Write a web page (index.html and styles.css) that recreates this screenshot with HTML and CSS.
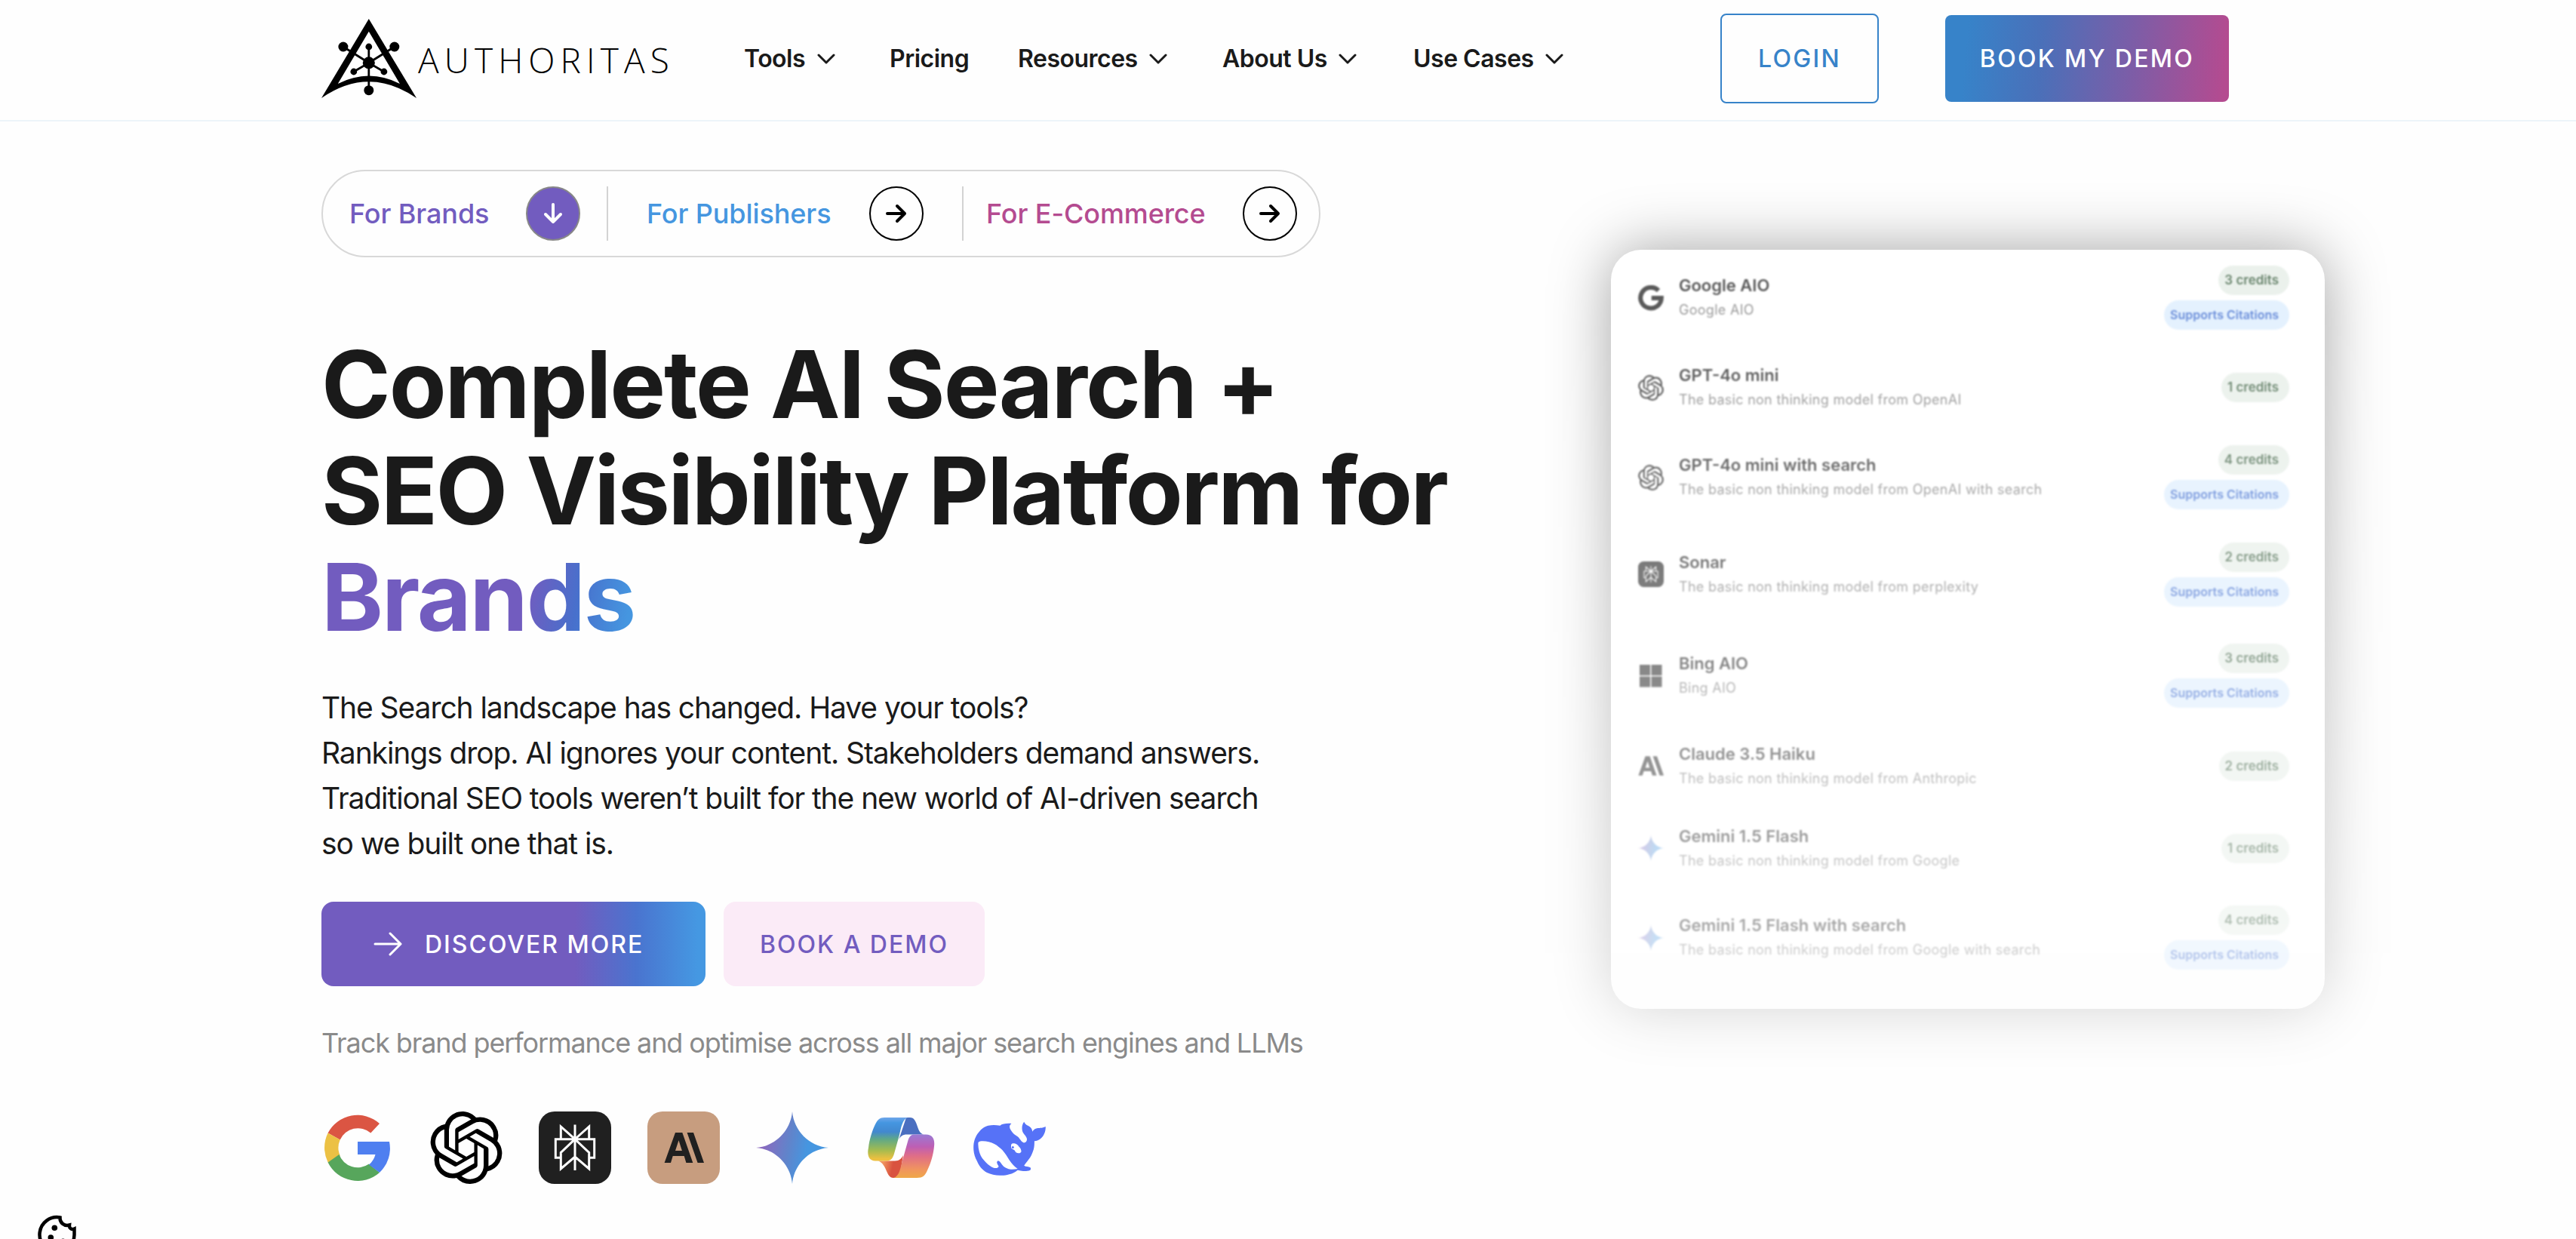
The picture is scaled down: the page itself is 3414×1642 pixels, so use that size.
FILE: index.html
```html
<!doctype html>
<html lang="en">
  <head>
    <title>Authoritas</title>
    <meta charset="utf-8" />
    <link rel="stylesheet" href="styles.css">
  </head>
  <body>
    <svg class="defs" width="0" height="0">
      <defs>
        <linearGradient id="star-fill" x1="0" y1="0.4" x2="1" y2="0.6">
          <stop offset="0.1" stop-color="#8a6abf" />
          <stop offset="0.45" stop-color="#6084cb" />
          <stop offset="0.7" stop-color="#4596e0" />
        </linearGradient>
        <linearGradient id="pilot-a" x1="0" y1="0" x2="0" y2="1">
          <stop offset="0" stop-color="#6fa6ea" />
          <stop offset="0.12" stop-color="#4596e0" />
          <stop offset="0.33" stop-color="#4288cf" />
          <stop offset="0.5" stop-color="#5fa888" />
          <stop offset="0.75" stop-color="#a3bb50" />
          <stop offset="0.95" stop-color="#ecc040" />
        </linearGradient>
        <linearGradient id="pilot-b" x1="0" y1="0" x2="0" y2="1">
          <stop offset="0" stop-color="#9a7ad4" />
          <stop offset="0.28" stop-color="#bd5fb4" />
          <stop offset="0.5" stop-color="#e06e86" />
          <stop offset="0.8" stop-color="#f0945f" />
          <stop offset="1" stop-color="#efa848" />
        </linearGradient>
        <linearGradient id="pilot-c" x1="0" y1="0" x2="1" y2="0.2">
          <stop offset="0.25" stop-color="#f0945f" />
          <stop offset="0.65" stop-color="#d9523f" />
        </linearGradient>
      </defs>
      <symbol id="chevron" viewBox="0 0 24 14"><path d="M2 2l10 10L22 2" fill="none" stroke="currentColor" stroke-width="3" stroke-linecap="round" stroke-linejoin="round" /></symbol>
      <symbol id="arrow" viewBox="0 0 28 28"><path d="M2 14h23M15 4l10 10-10 10" fill="none" stroke="currentColor" stroke-width="4" stroke-linecap="round" stroke-linejoin="round" /></symbol>
      <symbol id="openai" viewBox="0 0 24 24"><path fill="currentColor" d="M22.2819 9.8211a5.9847 5.9847 0 0 0-.5157-4.9108 6.0462 6.0462 0 0 0-6.5098-2.9A6.0651 6.0651 0 0 0 4.9807 4.1818a5.9847 5.9847 0 0 0-3.9977 2.9 6.0462 6.0462 0 0 0 .7427 7.0966 5.98 5.98 0 0 0 .511 4.9107 6.051 6.051 0 0 0 6.5146 2.9001A5.9847 5.9847 0 0 0 13.2599 24a6.0557 6.0557 0 0 0 5.7718-4.2058 5.9894 5.9894 0 0 0 3.9977-2.9001 6.0557 6.0557 0 0 0-.7475-7.0729zm-9.022 12.6081a4.4755 4.4755 0 0 1-2.8764-1.0408l.1419-.0804 4.7783-2.7582a.7948.7948 0 0 0 .3927-.6813v-6.7369l2.02 1.1686a.071.071 0 0 1 .038.052v5.5826a4.504 4.504 0 0 1-4.4945 4.4944zm-9.6607-4.1254a4.4708 4.4708 0 0 1-.5346-3.0137l.142.0852 4.783 2.7582a.7712.7712 0 0 0 .7806 0l5.8428-3.3685v2.3324a.0804.0804 0 0 1-.0332.0615L9.74 19.9502a4.4992 4.4992 0 0 1-6.1408-1.6464zM2.3408 7.8956a4.485 4.485 0 0 1 2.3655-1.9728V11.6a.7664.7664 0 0 0 .3879.6765l5.8144 3.3543-2.0201 1.1685a.0757.0757 0 0 1-.071 0l-4.8303-2.7865A4.504 4.504 0 0 1 2.3408 7.872zm16.5963 3.8558L13.1038 8.364 15.1192 7.2a.0757.0757 0 0 1 .071 0l4.8303 2.7913a4.4944 4.4944 0 0 1-.6765 8.1042v-5.6772a.79.79 0 0 0-.407-.667zm2.0107-3.0231l-.142-.0852-4.7735-2.7818a.7759.7759 0 0 0-.7854 0L9.409 9.2297V6.8974a.0662.0662 0 0 1 .0284-.0615l4.8303-2.7866a4.4992 4.4992 0 0 1 6.6802 4.66zM8.3065 12.863l-2.02-1.1638a.0804.0804 0 0 1-.038-.0567V6.0742a4.4992 4.4992 0 0 1 7.3757-3.4537l-.142.0805L8.704 5.459a.7948.7948 0 0 0-.3927.6813zm1.0976-2.3654l2.602-1.4998 2.6069 1.4998v2.9994l-2.5974 1.4997-2.6067-1.4997Z" /></symbol>
      <symbol id="perplexity" viewBox="0 0 96 96">
        <rect width="96" height="96" rx="21" fill="currentColor" />
        <path d="M48 17.5V78M29.3 61.3h-7V36.7h51.4v24.6h-7M48 36.7L29.3 20v16.7M48 36.7L66.7 20v16.7M48 36.7L29.3 54.5V76L48 60l18.7 16V54.5z" fill="none" stroke="#fff" stroke-width="3" />
      </symbol>
      <symbol id="anthropic" viewBox="21 28 53 40"><path fill="currentColor" fill-rule="evenodd" d="M21.6 68L36 28h9.3l14 40h-8.9l-2.7-9h-15L30 68zM40.5 38.3L36 52h8.9zM51.6 28H60l14 40h-8.4z" /></symbol>
      <symbol id="star" viewBox="0 0 96 96"><path fill="url(#star-fill)" d="M48 0C50 25 70 46 96 48C70 50 50 71 48 96C46 71 26 50 0 48C26 46 46 25 48 0z" /></symbol>
    </svg>

    <header class="header">
      <a class="logo">
        <svg class="logo-mark" viewBox="0 0 126 108">
          <path fill-rule="evenodd" d="M62.8 1L126 106Q62.8 62.5 0 106zM62.8 17.7L21.8 87Q62.8 66 103.9 87z" />
          <path d="M62.8 38v57M28.9 38l33.9 21.3L96.8 38M42.8 71l20-11.7 20 11.7" fill="none" stroke="#000" stroke-width="2.8" />
          <circle cx="62.8" cy="59.3" r="8" /><circle cx="28.9" cy="38" r="6.5" /><circle cx="96.8" cy="38" r="6.5" />
          <circle cx="62.8" cy="38" r="4.4" /><circle cx="42.8" cy="71" r="4.4" /><circle cx="82.9" cy="71" r="4.4" /><circle cx="62.8" cy="95.7" r="6.5" />
        </svg>
        <span class="logo-text">AUTHORITAS</span>
      </a>
      <nav class="nav">
        <a>Tools <svg><use href="#chevron" /></svg></a>
        <a>Pricing</a>
        <a>Resources <svg><use href="#chevron" /></svg></a>
        <a>About Us <svg><use href="#chevron" /></svg></a>
        <a>Use Cases <svg><use href="#chevron" /></svg></a>
      </nav>
      <a class="btn-login">LOGIN</a>
      <a class="btn-demo">BOOK MY DEMO</a>
    </header>

    <main class="hero">
      <section class="intro">
        <div class="tabs">
          <a class="tab brands"><span>For Brands</span><i class="round"><svg><use href="#arrow" /></svg></i></a>
          <a class="tab publishers"><span>For Publishers</span><i class="round"><svg><use href="#arrow" /></svg></i></a>
          <a class="tab ecommerce"><span>For E-Commerce</span><i class="round"><svg><use href="#arrow" /></svg></i></a>
        </div>

        <h1><span class="wide">Complete AI Search +</span><br>SEO Visibility Platform for<br><span class="grad">Brands</span></h1>

        <p class="lead">The Search landscape has changed. Have your tools?<br>
          Rankings drop. AI ignores your content. Stakeholders demand answers.<br>
          Traditional SEO tools weren’t built for the new world of AI-driven search<br>
          so we built one that is.</p>

        <div class="actions">
          <a class="discover">
            <svg viewBox="0 0 38 32"><path d="M2 16h34M22 2l14 14-14 14" fill="none" stroke="#fff" stroke-width="3" stroke-linecap="round" stroke-linejoin="round" /></svg>
            <span>DISCOVER MORE</span>
          </a>
          <a class="book">BOOK A DEMO</a>
        </div>

        <p class="track">Track brand performance and optimise across all major search engines and LLMs</p>

        <div class="engines">
          <svg viewBox="0 0 96 96">
            <path fill="#db5543" d="M77 16A44 44 0 0 0 8.6 28.500L24.700 37.500A26 26 0 0 1 65.300 28.500z" />
            <path fill="#ecc144" d="M8.6 28.5A44 44 0 0 0 8.6 67.5L24.7 58.500A26 26 0 0 1 24.7 37.500z" />
            <path fill="#57a65c" d="M8.6 67.5A44 44 0 0 0 77 81L63 69.5A26 26 0 0 1 23.500 57z" />
            <path fill="#4f7ff0" d="M48 40H90A44 44 0 0 1 77 81L63 70.5A26 26 0 0 0 71.5 57H48z" />
          </svg>
          <svg><use href="#openai" /></svg>
          <svg class="dark"><use href="#perplexity" /></svg>
          <span class="tan"><svg><use href="#anthropic" /></svg></span>
          <svg><use href="#star" /></svg>
          <svg viewBox="0 0 96 96">
            <path fill="#4a6fc0" d="M55 8H60C71 8 68 28 78 30.5H56C50 30.5 47 33 45 38z" />
            <path fill="url(#pilot-c)" d="M18 65.5H40C46 65.5 49 62 51 58L46 88H38C28 88 30 70 18 65.5z" />
            <path fill="url(#pilot-a)" d="M26 8H57C50 10 48 22 46 31L39 56C37 62 35 65.5 29 65.5H14C5 65.5 3 57 5 48C6 38 10 25 14 17C17 11 20 8 26 8z" />
            <path fill="url(#pilot-b)" d="M66 30.5H81C91 30.5 93 38 92 46C91 58 87 70 83 78C80 85 77 88 69 88H38C46 86 47 76 50 65L57 40C59 33 61 30.5 66 30.5z" />
          </svg>
          <svg viewBox="0 0 96 96">
            <path fill="#5672f7" d="M35.4 18.7C38 16.5 44 15.5 50.5 16C47.5 18 47.5 21 49.4 24.3C52 29 55 31 58.7 33.3C62 36 63 40 67 41.5C69.5 41.5 71.5 39 70.9 36C69.5 31 66 30 65 26C64 22 64.5 17 67.2 13.7C68.5 17 71 18 72.4 18.7C76 20.5 78 23 78.3 26.7C79.5 24.5 81 23.3 82.7 22.7C87 21.5 91 22.5 95.7 20C96.2 26 93.5 32 90 35.3C87 38 84 39 80.9 39.3C81 45 80.5 49 79 52.7C77.5 57 76 60 73.5 63.3C71 67 69 69 67.2 71.7C69.5 73.5 73 72.5 75.6 74.3C76.5 76 76 77 75.3 77.7C71 79.5 67 79 64.2 78.8C62 78.5 60.5 78 58.7 77.7C55 81 52 82 47.6 83.3C43 84.7 39 85 35.4 84.7C29 84.5 23 83.5 18 81C11 77 7.5 72 5 66C1.5 60 .2 54 .2 47.7C.2 40 2.5 33 7 27.7C11 22.5 15 20 19.8 18.7C25 17.5 30 17.8 35.4 18.7z" />
            <path fill="#fff" d="M6.5 41C8 39.3 10 39.3 12.4 39.3C18 39.3 23 40.5 27.2 42.7C32 45 35 48 38.3 51C42 55 45 60 47.6 64.3C51 69 54 73 58.7 76C55.5 76.5 52.5 77 49.4 76.7C45.5 76 43 75 40 72.7C37 70 36.5 66.5 32.8 65.3C31 66 31 68 31.7 69.3C32 71 33.5 71.5 33.5 73.3C32 75.5 29 75.3 27 74.7C23 73 20 71 16.9 67.7C13 64 10 60 8.7 56C7 51 6 46 6.5 41z" />
            <path fill="#fff" d="M50 44.5C50.5 42.5 52 42.3 54 42.3C57 42.5 59 44.5 60.5 46.7C62.5 48.5 63.5 50.5 63.5 53.3C62.5 55 61.5 55.5 59.8 55.3C57.5 55 56 54 55.4 52.7C54.5 50 51 50.5 50 48z" />
            <circle cx="52.3" cy="47.6" r="1.5" fill="#5672f7" />
          </svg>
        </div>
      </section>

      <section class="panel-fade">
        <div class="panel">
          <div class="row">
            <svg viewBox="0 0 96 96"><path d="M76 20A39 39 0 1 0 87 48H50" fill="none" stroke="currentColor" stroke-width="17" /></svg>
            <div class="model"><b>Google AIO</b><span>Google AIO</span></div>
            <div class="tags"><em>3 credits</em><em class="cite">Supports Citations</em></div>
          </div>
          <div class="row">
            <svg><use href="#openai" /></svg>
            <div class="model"><b>GPT-4o mini</b><span>The basic non thinking model from OpenAI</span></div>
            <div class="tags"><em>1 credits</em></div>
          </div>
          <div class="row">
            <svg><use href="#openai" /></svg>
            <div class="model"><b>GPT-4o mini with search</b><span>The basic non thinking model from OpenAI with search</span></div>
            <div class="tags"><em>4 credits</em><em class="cite">Supports Citations</em></div>
          </div>
          <div class="row">
            <svg><use href="#perplexity" /></svg>
            <div class="model"><b>Sonar</b><span>The basic non thinking model from perplexity</span></div>
            <div class="tags"><em>2 credits</em><em class="cite">Supports Citations</em></div>
          </div>
          <div class="row">
            <svg viewBox="0 0 34 34"><path fill="currentColor" d="M2 2h14v14H2zM17.500 2h14v14h-14zM2 17.500h14v14H2zM17.500 17.500h14v14h-14z" /></svg>
            <div class="model"><b>Bing AIO</b><span>Bing AIO</span></div>
            <div class="tags"><em>3 credits</em><em class="cite">Supports Citations</em></div>
          </div>
          <div class="row">
            <svg><use href="#anthropic" /></svg>
            <div class="model"><b>Claude 3.5 Haiku</b><span>The basic non thinking model from Anthropic</span></div>
            <div class="tags"><em>2 credits</em></div>
          </div>
          <div class="row">
            <svg class="pale"><use href="#star" /></svg>
            <div class="model"><b>Gemini 1.5 Flash</b><span>The basic non thinking model from Google</span></div>
            <div class="tags"><em>1 credits</em></div>
          </div>
          <div class="row">
            <svg class="pale"><use href="#star" /></svg>
            <div class="model"><b>Gemini 1.5 Flash with search</b><span>The basic non thinking model from Google with search</span></div>
            <div class="tags"><em>4 credits</em><em class="cite">Supports Citations</em></div>
          </div>
        </div>
      </section>
    </main>

    <svg class="cookie" viewBox="0 0 52 52">
      <path d="M29.5 3.500A23 23 0 1 0 48.5 26.5V18.5C45 20 41.5 18 42 13.5C35 15.5 29 10 29.5 3.500z" fill="none" stroke="#000" stroke-width="4.5" />
      <circle cx="22.3" cy="17.3" r="3.8" /><circle cx="17.3" cy="30" r="3.8" /><circle cx="33.5" cy="35" r="3.5" />
    </svg>
  </body>
</html>
```
FILE: styles.css
```css
* {
  box-sizing: border-box;
}

body {
  margin: 0;
  height: 1642px;
  overflow: hidden;
  background: #fefefe;
  color: #1a1a1a;
  font-family: Inter, "Liberation Sans", sans-serif;
}

.defs {
  display: block;
  height: 0;
}

/* header */
.header {
  display: flex;
  height: 161px;
  padding: 0 0 4px 426px;
  align-items: center;
  border-bottom: 2px solid #edf4f9;
  white-space: nowrap;
}

.logo {
  display: flex;
  width: 560px;
  align-items: center;
}

.logo-mark {
  width: 126px;
  height: 108px;
  margin-top: 1px;
}

.logo-text {
  margin-left: 2px;
  margin-top: 2px;
  color: #000;
  font-family: "Open Sans", sans-serif;
  font-size: 46px;
  font-weight: 300;
  letter-spacing: 7.1px;
}

.nav {
  display: grid;
  width: 1294px;
  grid-template-columns: 193px 170px 271px 253px auto;
  font-size: 32px;
  font-weight: 600;
  letter-spacing: -0.5px;
}

.nav svg {
  width: 24px;
  height: 14px;
  margin-left: 8px;
  vertical-align: 4px;
}

.btn-login,
.btn-demo {
  display: flex;
  align-items: center;
  justify-content: center;
  font-size: 32px;
  font-weight: 500;
  letter-spacing: 2.3px;
}

.btn-login {
  width: 210px;
  height: 119px;
  border: 2px solid #3783c9;
  border-radius: 8px;
  color: #3783c9;
}

.btn-demo {
  width: 376px;
  height: 115px;
  margin-left: 88px;
  border-radius: 8px;
  color: #fff;
  background: linear-gradient(95deg, #3783c9 8%, #4a70b9 34%, #7a5ea8 64%, #b44b90 98%);
}

/* hero */
.hero {
  display: flex;
  padding-left: 426px;
}

.intro {
  width: 1609px;
  padding-top: 64px;
  white-space: nowrap;
}

.tabs {
  display: flex;
  width: 1324px;
  height: 116px;
  padding-left: 35px;
  align-items: center;
  border: 2px solid #d8d8d8;
  border-radius: 58px;
  font-size: 36px;
  font-weight: 500;
  letter-spacing: -0.1px;
}

.tab {
  display: flex;
  height: 72px;
  align-items: center;
  justify-content: space-between;
}

.tab + .tab {
  border-left: 2px solid #d3d3d3;
}

.brands {
  width: 341px;
  padding-right: 35px;
  color: #725cbf;
}

.publishers {
  width: 471px;
  padding: 0 51px 0 51px;
  color: #4596e0;
}

.ecommerce {
  width: 444px;
  padding-left: 30px;
  color: #b44b90;
}

.round {
  display: flex;
  width: 72px;
  height: 72px;
  align-items: center;
  justify-content: center;
  border: 2px solid #000;
  border-radius: 50%;
  color: #000;
}

.round svg {
  width: 28px;
  height: 28px;
}

.brands .round {
  border-color: #888;
  background: #725cbf;
  color: #fff;
}

.brands .round svg {
  transform: rotate(90deg);
}

h1 {
  margin: 98px 0 0;
  font-size: 124px;
  font-weight: 700;
  line-height: 141px;
  letter-spacing: -2.5px;
  font-feature-settings: "calt" 0, "liga" 0;
}

.wide {
  letter-spacing: -2.1px;
}

.grad {
  letter-spacing: -2.1px;
  background: linear-gradient(100deg, #725cbf 64%, #4870cc 80%, #4596e0 96%);
  -webkit-background-clip: text;
  background-clip: text;
  color: transparent;
}

.lead {
  margin: 46px 0 47px;
  font-size: 39px;
  line-height: 60px;
  letter-spacing: -1.08px;
}

.actions {
  display: flex;
  gap: 24px;
  font-size: 32px;
  font-weight: 500;
  letter-spacing: 2px;
}

.actions a {
  display: flex;
  height: 112px;
  align-items: center;
  border-radius: 16px;
}

.discover {
  width: 509px;
  padding-left: 69px;
  background: linear-gradient(90deg, #725cbf 66%, #4a74cf 82%, #4598e2 98%);
  color: #fff;
}

.discover svg {
  width: 38px;
  height: 32px;
  margin-right: 30px;
}

.book {
  width: 346px;
  justify-content: center;
  background: #fbebf7;
  color: #725cbf;
}

.track {
  margin: 50px 0 66px;
  color: #8a8a8a;
  font-size: 36px;
  line-height: 50px;
  letter-spacing: -1.1px;
}

.engines {
  display: flex;
  gap: 48px;
  color: #000;
}

.engines > * {
  width: 96px;
  height: 96px;
}

.engines .dark {
  color: #202020;
}

.tan {
  display: flex;
  align-items: center;
  justify-content: center;
  border-radius: 20px;
  background: #c79d7f;
  color: #202020;
}

.tan svg {
  width: 53px;
  height: 40px;
}

/* model list, fades out to the bottom together with its shadow */
.panel-fade {
  margin: 50px 0 0;
  padding: 120px 100px 120px 100px;
  -webkit-mask-image: linear-gradient(#000 15%, rgba(0, 0, 0, 0.4) 90%);
  mask-image: linear-gradient(#000 15%, rgba(0, 0, 0, 0.4) 90%);
}

.panel {
  display: grid;
  width: 946px;
  height: 1006px;
  padding: 4px 47px 0 36px;
  grid-template-rows: 119px 119px 119px 138px 131px 108px 110px 127px;
  border-radius: 40px;
  background: #fff;
  box-shadow: 0 0 80px rgba(0, 0, 0, 0.36);
}

.row {
  display: flex;
  align-items: center;
  color: #5a5a5a;
  white-space: nowrap;
  filter: blur(0.8px);
}

.row svg {
  width: 34px;
  height: 34px;
}

.row .pale {
  opacity: 0.6;
}

.model {
  display: flex;
  flex-direction: column;
  margin-left: 20px;
  gap: 5px;
  flex: 1;
}

.model b {
  font-size: 22px;
  font-weight: 600;
  line-height: 28px;
}

.model span {
  color: #9c9c9c;
  font-size: 18px;
  line-height: 28px;
  letter-spacing: 0.28px;
}

.tags {
  display: flex;
  flex-direction: column;
  align-items: flex-end;
  gap: 7px;
}

.tags em {
  padding: 0 14px 0 8px;
  border-radius: 20px;
  background: #ebf1ec;
  color: #6c8770;
  font-size: 17px;
  font-style: normal;
  font-weight: 600;
  line-height: 39px;
}

.tags .cite {
  background: #e4f1fe;
  color: #6c8fda;
  font-size: 16px;
}

.cookie {
  position: fixed;
  left: 50px;
  top: 1610px;
  width: 52px;
  height: 52px;
}
```
